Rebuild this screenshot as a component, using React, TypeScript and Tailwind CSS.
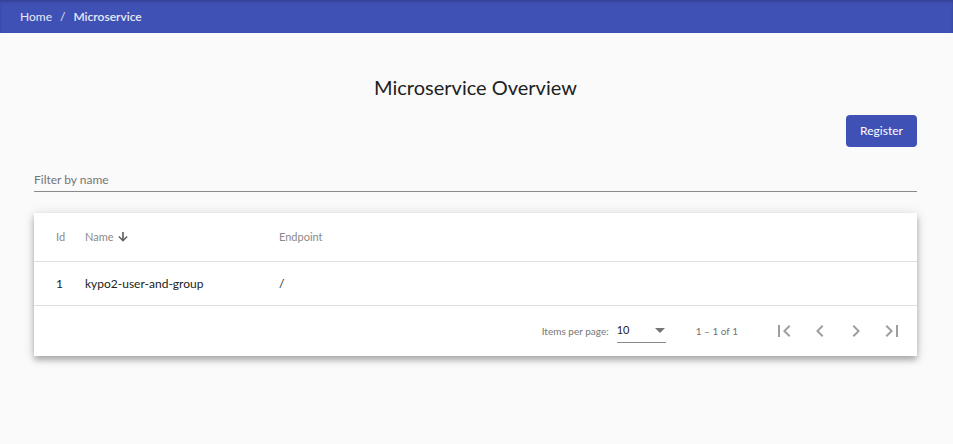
import React from "react";

const font = { fontFamily: "Lato, 'Noto Sans', sans-serif" };

function PagerIcon({ d }: { d: string }) {
  return (
    <svg width="24" height="24" viewBox="0 0 24 24" fill="#9e9e9e">
      <path d={d} />
    </svg>
  );
}

export default function App() {
  return (
    <div className="min-h-[444px] bg-[#fafafa]" style={font}>
      {/* toolbar */}
      <div className="h-[33px] bg-[#3f51b5] flex items-center px-5 text-[12px] text-[#e8eaf6] shadow-[inset_0_2px_3px_rgba(0,0,0,0.18)]">
        <span>Home</span>
        <span className="mx-[8px]">/</span>
        <span className="font-semibold">Microservice</span>
      </div>

      <div className="pl-[34px] pr-[36px] pt-[42px] w-[953px]">
        <h1 className="text-center text-[20px] text-[#212121] leading-[24px]">
          Microservice Overview
        </h1>

        <div className="flex justify-end mt-[16px]">
          <button className="h-[32px] w-[71px] rounded bg-[#3f51b5] text-white text-[12px]">
            Register
          </button>
        </div>

        {/* filter */}
        <div className="mt-[25px] border-b border-[#8a8a8a] pb-[3px] text-[12px] leading-[16px] text-[#757575]">
          Filter by name
        </div>

        {/* table card */}
        <div className="mt-[21px] bg-white shadow-[0_4px_6px_rgba(0,0,0,0.28),0_1px_12px_rgba(0,0,0,0.12)]">
          <div className="h-[49px] flex items-center text-[11px] text-[#8a8a8a] border-b border-[#e0e0e0]">
            <div className="w-[51px] pl-[22px]">Id</div>
            <div className="w-[194px] flex items-center gap-[2px]">
              <span>Name</span>
              <svg width="14" height="14" viewBox="0 0 24 24" fill="#616161">
                <path d="M20 12l-1.9-1.9L13.4 14.8V3.5h-2.8v11.3L5.9 10.1 4 12l8 8 8-8z" />
              </svg>
            </div>
            <div>Endpoint</div>
          </div>
          <div className="h-[44px] flex items-center text-[12px] text-[#212121] border-b border-[#e0e0e0]">
            <div className="w-[51px] pl-[22px]">1</div>
            <div className="w-[194px]">kypo2-user-and-group</div>
            <div>/</div>
          </div>
          <div className="h-[50px] flex items-center justify-end text-[10px] text-[#757575] pr-[13px]">
            <span>Items per page:</span>
            <div className="ml-[8px] w-[49px] h-[24px] border-b border-[#8a8a8a] flex items-center justify-between text-[11px] text-[#212121]">
              <span>10</span>
              <svg width="10" height="5" viewBox="0 0 10 5" className="mr-[1px]">
                <path d="M0 0l5 5 5-5z" fill="#757575" />
              </svg>
            </div>
            <span className="ml-[30px] mr-[34px]">1 – 1 of 1</span>
            <div className="flex gap-[12px]">
              <PagerIcon d="M18.41 16.59L13.82 12l4.59-4.59L17 6l-6 6 6 6zM6 6h2v12H6z" />
              <PagerIcon d="M15.41 7.41L14 6l-6 6 6 6 1.41-1.41L10.83 12z" />
              <PagerIcon d="M10 6L8.59 7.41 13.17 12l-4.58 4.59L10 18l6-6z" />
              <PagerIcon d="M5.59 7.41L10.18 12l-4.59 4.59L7 18l6-6-6-6zM16 6h2v12h-2z" />
            </div>
          </div>
        </div>
      </div>
    </div>
  );
}
